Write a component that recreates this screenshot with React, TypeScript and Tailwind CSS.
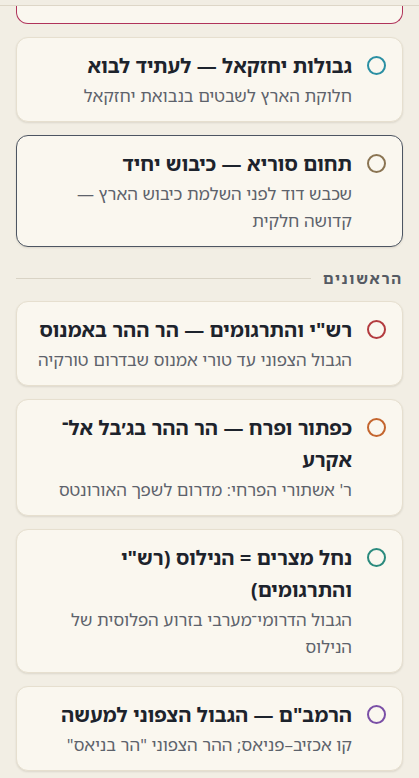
import React from 'react';

interface Opinion {
  title: string;
  desc: string;
  ring: string;
  border?: string;
}

const upper: Opinion[] = [
  {
    title: 'גבולות יחזקאל — לעתיד לבוא',
    desc: 'חלוקת הארץ לשבטים בנבואת יחזקאל',
    ring: 'border-[#2a8fa3]',
  },
  {
    title: 'תחום סוריא — כיבוש יחיד',
    desc: 'שכבש דוד לפני השלמת כיבוש הארץ — קדושה חלקית',
    ring: 'border-[#8a7452]',
    border: 'border-[#4d5562]',
  },
];

const rishonim: Opinion[] = [
  {
    title: 'רש"י והתרגומים — הר ההר באמנוס',
    desc: 'הגבול הצפוני עד טורי אמנוס שבדרום טורקיה',
    ring: 'border-[#b33b3f]',
  },
  {
    // zero-width space lets the line break after the maqaf
    title: 'כפתור ופרח — הר ההר בג׳בל אל־\u200Bאקרע',
    desc: "ר' אשתורי הפרחי: מדרום לשפך האורונטס",
    ring: 'border-[#c4652e]',
  },
  {
    title: 'נחל מצרים = הנילוס (רש"י והתרגומים)',
    desc: 'הגבול הדרומי־מערבי בזרוע הפלוסית של הנילוס',
    ring: 'border-[#2a8a7d]',
  },
  {
    title: 'הרמב"ם — הגבול הצפוני למעשה',
    desc: 'קו אכזיב–פניאס; ההר הצפוני "הר בניאס"',
    ring: 'border-[#7a4fa6]',
  },
];

const OpinionCard: React.FC<{ item: Opinion }> = ({ item }) => (
  <div
    className={`flex items-start gap-[15px] rounded-xl border bg-[#faf7ef] px-4 py-3 shadow-[0_1px_2px_rgba(60,50,30,0.12)] ${
      item.border ?? 'border-[#e6dfcf]'
    }`}
  >
    <span className={`mt-[6px] h-[19px] w-[19px] shrink-0 rounded-full border-2 ${item.ring}`}></span>
    <div className="flex min-w-0 flex-col">
      <div className="text-[20px] font-bold leading-[32px] text-[#1d232c]">{item.title}</div>
      <div className="text-[17px] leading-[27px] text-[#5d626b]">{item.desc}</div>
    </div>
  </div>
);

export default function App() {
  return (
    <div
      dir="rtl"
      className="min-h-screen bg-[#f2eee4] pb-6"
      style={{ fontFamily: '"Noto Sans Hebrew", "Noto Sans", "DejaVu Sans", sans-serif' }}
    >
      <div className="h-[6px] border-b border-[#ddd6c7] bg-[#f1ede3]"></div>

      <div className="flex flex-col gap-[13px] px-4">
        {/* tail of the card above, scrolled under the header */}
        <div className="h-[18px] rounded-b-xl border border-t-0 border-[#b0335a] bg-[#faf7ef]"></div>

        {upper.map((o) => (
          <OpinionCard key={o.title} item={o} />
        ))}

        <div className="mt-[8px] flex items-center gap-3">
          <span className="whitespace-nowrap text-[15px] font-bold leading-5 tracking-[1.8px] text-[#555a63]">
            הראשונים
          </span>
          <span className="h-px flex-1 bg-[#d9d3c5]"></span>
        </div>

        {rishonim.map((o) => (
          <OpinionCard key={o.title} item={o} />
        ))}
      </div>
    </div>
  );
}
